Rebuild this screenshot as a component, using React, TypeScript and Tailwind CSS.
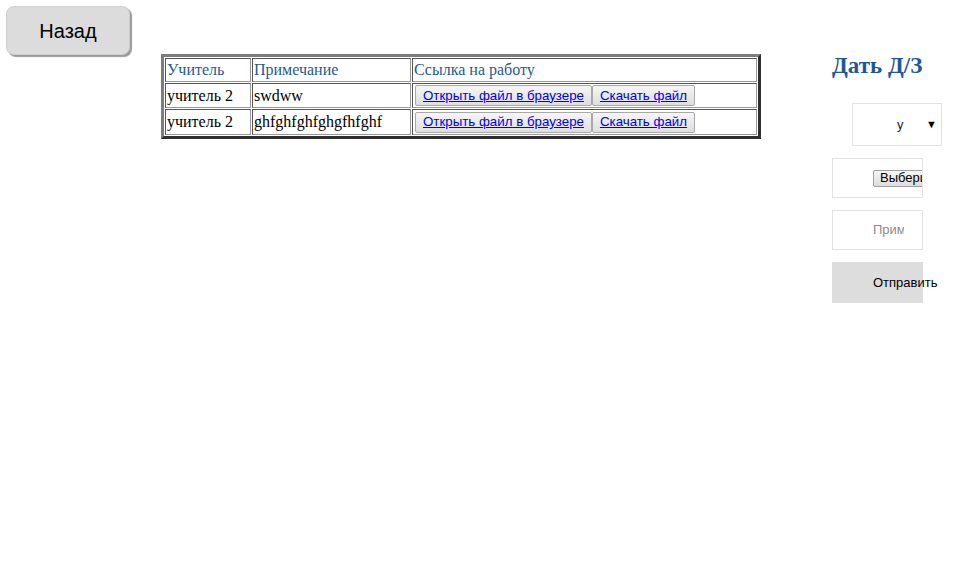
import React from 'react';

const rows = [
  { teacher: 'учитель 2', note: 'swdww' },
  { teacher: 'учитель 2', note: 'ghfghfghfghgfhfghf' },
];

const cell = 'border border-t-[#555] border-l-[#555] border-b-[#999] border-r-[#999] px-[1px] py-0 align-middle';

const App: React.FC = () => {
  return (
    <div className="w-[970px] h-[566px] bg-white relative overflow-hidden font-['Liberation_Serif',serif]">
      {/* Back button */}
      <div className="absolute left-[6px] top-[6px]">
        <button className="w-[124px] h-[49px] rounded-[8px] bg-[#dcdcdc] border border-[#cfcfcf] shadow-[2px_2px_1px_#9a9a9a] font-['Liberation_Sans',Arial,sans-serif] text-[20px] text-black">
          Назад
        </button>
      </div>

      {/* Table */}
      <div className="absolute left-[161px] top-[54px]">
        <table className="border-separate border-spacing-[1px] border-[3px] border-t-[#7d7d7d] border-l-[#7d7d7d] border-b-[#2f2f2f] border-r-[#2f2f2f] w-[600px] text-[16px] leading-[20px]">
          <tbody>
            <tr className="h-[24px] text-[#1f5b94]">
              <td className={`${cell} w-[86px]`}>Учитель</td>
              <td className={`${cell} w-[159px]`}>Примечание</td>
              <td className={cell}>Ссылка на работу</td>
            </tr>
            {rows.map((r, i) => (
              <tr key={i} className={i === 0 ? 'h-[25px]' : 'h-[26px]'}>
                <td className={`${cell} text-black`}>{r.teacher}</td>
                <td className={`${cell} text-black`}>{r.note}</td>
                <td className={cell}>
                  <div className="flex pl-[1px] font-['Liberation_Sans',Arial,sans-serif] text-[13.3px]">
                    <span className="h-[21px] px-[7px] flex items-center bg-gradient-to-b from-[#f6f6f6] to-[#dedede] border border-[#a9a9a9] rounded-[2px] text-[#0000ee] underline">
                      Открыть файл в браузере
                    </span>
                    <span className="h-[21px] px-[7px] flex items-center bg-gradient-to-b from-[#f6f6f6] to-[#dedede] border border-[#a9a9a9] rounded-[2px] text-[#0000ee] underline">
                      Скачать файл
                    </span>
                  </div>
                </td>
              </tr>
            ))}
          </tbody>
        </table>
      </div>

      {/* Right form */}
      <div className="absolute left-[832px] top-[52px] flex flex-col">
        <h2 className="text-[23px] leading-[28px] font-bold text-[#1e5799]">Дать Д/З</h2>
        <div className="ml-[20px] mt-[23px] w-[90px] h-[43px] border border-[#e3e3e3] flex items-center font-['Liberation_Sans',Arial,sans-serif] text-[13px] text-[#222]">
          <span className="ml-[44px]">у</span>
          <span className="ml-auto mr-[4px] text-[11px] text-black">▼</span>
        </div>
        <div className="mt-[12px] w-[91px] h-[40px] border border-[#e3e3e3] overflow-hidden flex items-center font-['Liberation_Sans',Arial,sans-serif] text-[13px]">
          <span className="ml-[40px] h-[17px] pl-[6px] pr-[10px] flex items-center bg-gradient-to-b from-[#f5f5f5] to-[#dddddd] border border-[#a0a0a0] rounded-[2px] text-black whitespace-nowrap">
            Выберите файл
          </span>
        </div>
        <div className="mt-[12px] w-[91px] h-[40px] border border-[#e3e3e3] overflow-hidden flex items-center font-['Liberation_Sans',Arial,sans-serif] text-[13px]">
          <span className="ml-[40px] w-[31px] overflow-hidden whitespace-nowrap text-[#8a8a8a]">Примечание</span>
        </div>
        <div className="mt-[12px] w-[91px] h-[41px] bg-[#dddddd] flex items-center font-['Liberation_Sans',Arial,sans-serif] text-[13px] text-black whitespace-nowrap">
          <span className="ml-[41px]">Отправить</span>
        </div>
      </div>
    </div>
  );
};

export default App;
